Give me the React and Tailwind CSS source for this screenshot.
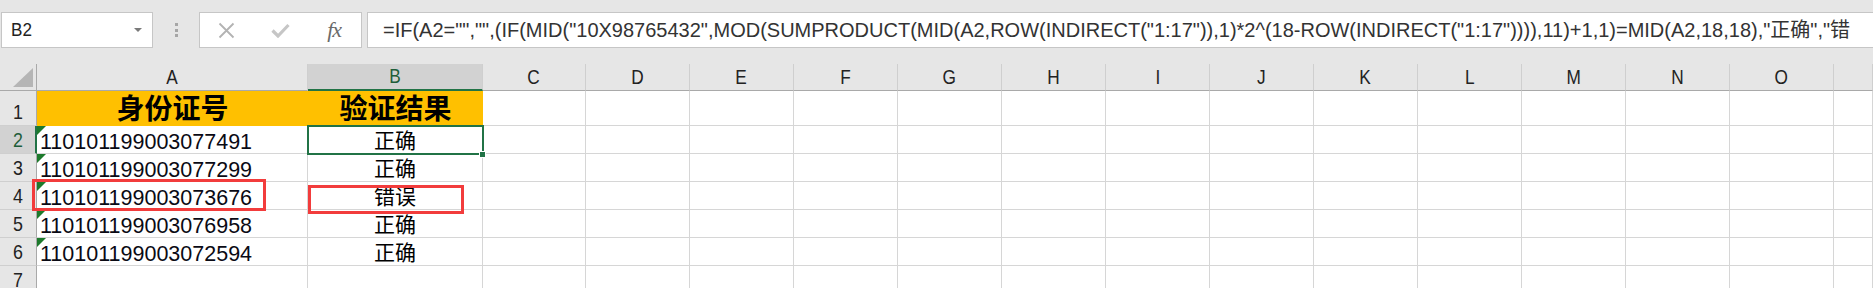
import React from 'react'

const cols = ['A', 'B', 'C', 'D', 'E', 'F', 'G', 'H', 'I', 'J', 'K', 'L', 'M', 'N', 'O', 'P']

const rows = [
  { id: '110101199003077491', result: '正确' },
  { id: '110101199003077299', result: '正确' },
  { id: '110101199003073676', result: '错误' },
  { id: '110101199003076958', result: '正确' },
  { id: '110101199003072594', result: '正确' },
]

const formula =
  '=IF(A2="","",(IF(MID("10X98765432",MOD(SUMPRODUCT(MID(A2,ROW(INDIRECT("1:17")),1)*2^(18-ROW(INDIRECT("1:17")))),11)+1,1)=MID(A2,18,18),"正确","错'

const cjk = "font-['Liberation_Sans','Noto_Sans_CJK_SC',sans-serif]"

function GreenTick() {
  return (
    <svg className="absolute left-0 top-0" width="9" height="9" viewBox="0 0 9 9">
      <polygon points="0,0 9,0 0,9" fill="#1d7a2c" />
    </svg>
  )
}

function ColHeader({ label }) {
  const selected = label === 'B'
  return (
    <div
      className={`flex items-end justify-center border-r border-[#cfcfcf] ${
        selected ? 'bg-[#d2d2d2] border-b-2 border-b-[#217346] text-[#1e5e3a]' : 'bg-[#e6e6e6] border-b border-b-[#a9a9a9] text-[#222]'
      }`}
    >
      {/* last column is cut by the window edge, its letter is off screen */}
      {label !== 'P' && <span className="text-[21px] leading-[24px] scale-x-[0.82] pb-[1px]">{label}</span>}
    </div>
  )
}

function RowHeader({ n }) {
  const selected = n === 2
  return (
    <div
      className={`flex items-end justify-center border-b border-[#cfcfcf] ${
        selected ? 'bg-[#d2d2d2] border-r-2 border-r-[#217346] text-[#1e5e3a]' : 'bg-[#e6e6e6] border-r border-r-[#a9a9a9] text-[#222]'
      }`}
    >
      <span className="text-[21px] leading-[24px] scale-x-[0.85] pb-[1px]">{n}</span>
    </div>
  )
}

function Cell({ children, className = '' }) {
  return <div className={`relative border-r border-b border-[#d6d6d6] bg-white ${className}`}>{children}</div>
}

export default function App() {
  return (
    <div className={`w-[1873px] h-[288px] overflow-hidden bg-[#e6e6e6] ${cjk}`}>
      {/* formula bar */}
      <div className="flex h-[36px] mt-[12px]">
        <div className="ml-[1px] w-[152px] bg-white border border-[#c6c6c6] flex items-center justify-between pl-[9px] pr-[10px]">
          <span className="text-[19px] text-[#222] scale-x-[0.9] origin-left">B2</span>
          <svg width="8" height="4" viewBox="0 0 8 4">
            <polygon points="0,0 8,0 4,4" fill="#7a7a7a" />
          </svg>
        </div>
        <div className="w-[46px] flex flex-col items-center justify-center gap-[2.5px]">
          <span className="w-[3px] h-[3px] bg-[#a6a6a6]" />
          <span className="w-[3px] h-[3px] bg-[#a6a6a6]" />
          <span className="w-[3px] h-[3px] bg-[#a6a6a6]" />
        </div>
        <div className="w-[163px] bg-white border border-[#c6c6c6] grid grid-cols-3 items-center justify-items-center">
          <svg width="17" height="17" viewBox="0 0 17 17">
            <path d="M1.5 1.5 L15.5 15.5 M15.5 1.5 L1.5 15.5" stroke="#b3b3b3" strokeWidth="1.8" fill="none" />
          </svg>
          <svg width="19" height="15" viewBox="0 0 19 15">
            <path d="M1.5 7.5 L7 13 L17.5 2" stroke="#c6c6c6" strokeWidth="3.2" fill="none" />
          </svg>
          <span className="font-['Liberation_Serif',serif] italic text-[22px] leading-none text-[#6a6a6a] tracking-[-1px]">fx</span>
        </div>
        <div className="ml-[5px] flex-1 bg-white border border-r-0 border-[#c6c6c6] flex items-center pl-[15px] overflow-hidden whitespace-nowrap">
          <span className="text-[20px] text-[#333]">{formula}</span>
        </div>
      </div>

      {/* sheet */}
      <div className="relative mt-[16px]">
        <div className="grid grid-cols-[37px_271px_175px_103px_repeat(12,104px)_1fr] grid-rows-[27px_35px_repeat(6,28px)]">
          <div className="relative bg-[#e6e6e6] border-r border-b border-[#a9a9a9]">
            <svg className="absolute right-[3px] bottom-[3px]" width="20" height="19" viewBox="0 0 20 19">
              <polygon points="20,0 20,19 0,19" fill="#b5b5b5" />
            </svg>
          </div>
          {cols.map((c) => (
            <ColHeader key={c} label={c} />
          ))}

          {/* row 1 */}
          <RowHeader n={1} />
          <div className="flex items-end justify-center bg-[#ffc000] border-b border-[#ffc000]">
            <span className="text-[28px] leading-[30px] font-bold text-black">身份证号</span>
          </div>
          <div className="flex items-end justify-center bg-[#ffc000] border-b border-[#ffc000]">
            <span className="text-[28px] leading-[30px] font-bold text-black">验证结果</span>
          </div>
          {cols.slice(2).map((c) => (
            <Cell key={c} />
          ))}

          {rows.map((r, i) => (
            <React.Fragment key={r.id}>
              <RowHeader n={i + 2} />
              <Cell className="flex items-end pl-[3px]">
                <GreenTick />
                <span className="text-[21.5px] leading-[21px] text-[#0a0a14]">{r.id}</span>
              </Cell>
              <Cell className="flex items-center justify-center">
                <span className="text-[21px] leading-[24px] text-black pt-[3px]">{r.result}</span>
              </Cell>
              {cols.slice(2).map((c) => (
                <Cell key={c} />
              ))}
            </React.Fragment>
          ))}

          <RowHeader n={7} />
          {cols.map((c) => (
            <Cell key={c} />
          ))}
        </div>

        {/* active cell B2 */}
        <div className="absolute left-[307px] top-[61px] w-[177px] h-[30px] border-2 border-[#217346]" />
        <div className="absolute left-[479px] top-[87px] w-[7px] h-[7px] bg-[#217346] border border-white" />

        {/* annotations */}
        <div className="absolute left-[32px] top-[115px] w-[234px] h-[32px] border-[3px] border-[#f23c3c]" />
        <div className="absolute left-[308px] top-[121px] w-[156px] h-[29px] border-[3px] border-[#f23c3c]" />
      </div>
    </div>
  )
}
